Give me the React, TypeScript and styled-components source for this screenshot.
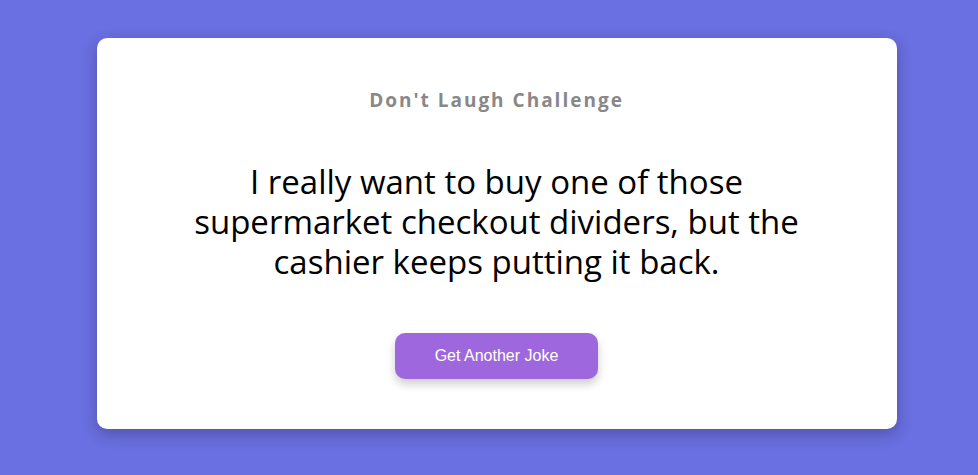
import React from "react";
import styled, {createGlobalStyle} from "styled-components";

const GlobalStyle = createGlobalStyle`
  html, body {
    margin: 0;
    padding: 0;
    background-color: #6a6fe1;
  }
`

const Page = styled.div`
  min-height: 475px;
  box-sizing: border-box;
  display: flex;
  justify-content: center;
  align-items: flex-start;
  padding: 38px 0 46px 15px;
`

const Card = styled.div`
  width: 800px;
  box-sizing: border-box;
  background: #fff;
  border-radius: 10px;
  box-shadow: 0 5px 15px rgba(0, 0, 0, 0.25);
  padding: 50px 40px 50px;
  display: flex;
  flex-direction: column;
  align-items: center;
  text-align: center;
`

const Title = styled.h3`
  margin: 0;
  font-family: "Open Sans", "Noto Sans", sans-serif;
  font-size: 19px;
  line-height: 24px;
  font-weight: 700;
  letter-spacing: 2px;
  color: #888;
`

const Joke = styled.p`
  margin: 50px 0 0;
  max-width: 640px;
  font-family: "Open Sans", "Noto Sans", sans-serif;
  font-size: 33px;
  line-height: 40px;
  color: #000;
`

const JokeButton = styled.button`
  margin-top: 51px;
  width: 203px;
  height: 46px;
  border: 0;
  border-radius: 10px;
  background-color: #9f67dd;
  color: #fff;
  font-family: "Liberation Sans", Arial, sans-serif;
  font-size: 16px;
  cursor: pointer;
  box-shadow: 0 5px 10px rgba(0, 0, 0, 0.2);
`

function App() {
  const [joke] = React.useState(
    "I really want to buy one of those supermarket checkout dividers, but the cashier keeps putting it back."
  );
  return (
    <>
      <GlobalStyle/>
      <Page>
        <Card>
          <Title>Don't Laugh Challenge</Title>
          <Joke>{joke}</Joke>
          <JokeButton>Get Another Joke</JokeButton>
        </Card>
      </Page>
    </>
  );
}

export default App;
